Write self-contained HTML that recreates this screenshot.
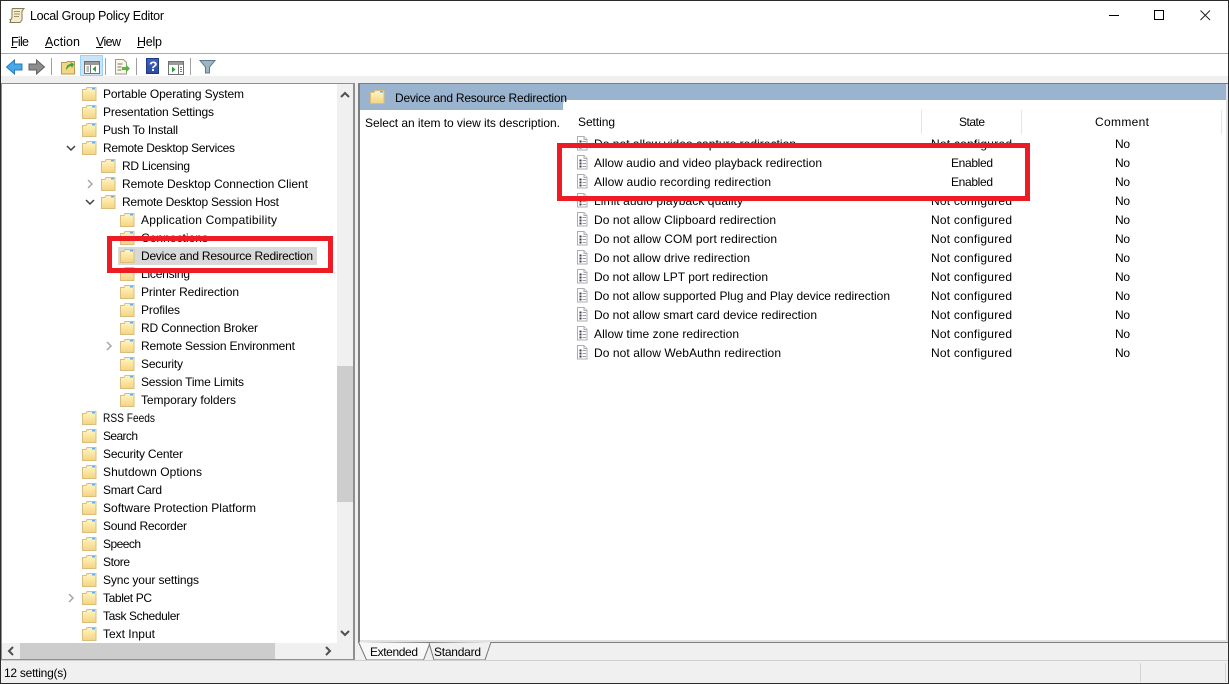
<!DOCTYPE html>
<html><head><meta charset="utf-8"><title>Local Group Policy Editor</title>
<style>
html,body{margin:0;padding:0;background:#fff;width:1229px;height:684px;overflow:hidden}
svg{display:block}
text{font-family:"Liberation Sans",sans-serif;font-size:12px;fill:#000}
.t{font-size:12.5px}
</style></head><body>
<svg width="1229" height="684" viewBox="0 0 1229 684" xmlns="http://www.w3.org/2000/svg">
<defs>
<linearGradient id="fg" x1="0" y1="0" x2="0" y2="1"><stop offset="0" stop-color="#fff0b8"/><stop offset="1" stop-color="#f5d583"/></linearGradient>
<linearGradient id="hb" x1="0" y1="0" x2="0" y2="1"><stop offset="0" stop-color="#3f5fc0"/><stop offset="1" stop-color="#2f4aa0"/></linearGradient>
<g id="f">
<path d="M0.500 2.500h3.500l1-2h9v13h-13.500z" fill="#fbeeca" stroke="#d9bd7c"/>
<rect x="10" y="1" width="3" height="1.500" fill="#62aee6"/>
<rect x="1" y="3" width="12.500" height="10" fill="url(#fg)"/>
</g>
<g id="d">
<path d="M0.500 0.500h6.500l3 3v10.500h-9.500z" fill="#fff" stroke="#adadad"/>
<path d="M7 0.500v3h3" fill="#f0f0f0" stroke="#adadad"/>
<path d="M2.500 4.500h2v2h-2zM2.500 7.500h2v2h-2zM2.500 10.500h2v2h-2z" fill="#3c3c50"/>
<path d="M5.500 5.500h3.500M5.500 8.500h3.500M5.500 11.500h3.500" stroke="#9a9aa8"/>
</g>
</defs>

<rect width="1229" height="684" fill="#fff"/>

<!-- toolbar / menu separators -->
<rect x="1" y="53" width="1227" height="1" fill="#a9a9b8"/>
<rect x="1" y="76" width="1227" height="7" fill="#f0f0f0"/>
<rect x="1" y="83" width="1227" height="578" fill="#f0f0f0"/>

<!-- title bar -->
<path d="M12.500 8.500h11.500l-2 2.500v9l-2 2.500h-10.500c1.500-.5 1.500-2.500 0-3h1.500l1-2v-8z" fill="#f5ecc8" stroke="#85795a"/>
<path d="M14 11.500h6M14 14h6M14 16.500h5" stroke="#9c9275"/>
<text x="30" y="20" class="t" textLength="134" lengthAdjust="spacing">Local Group Policy Editor</text>
<rect x="1109" y="15" width="10" height="1" fill="#000"/>
<rect x="1154.500" y="10.500" width="9" height="9" fill="none" stroke="#000"/>
<path d="M1200.500 10.500l9.500 9.500M1210 10.500l-9.500 9.500" stroke="#222" fill="none"/>

<!-- menu -->
<text x="11" y="46" class="t" textLength="18" lengthAdjust="spacing">File</text><rect x="11" y="47" width="6" height="1" fill="#000"/>
<text x="45" y="46" class="t" textLength="35" lengthAdjust="spacing">Action</text><rect x="45" y="47" width="7" height="1" fill="#000"/>
<text x="96" y="46" class="t" textLength="25" lengthAdjust="spacing">View</text><rect x="96" y="47" width="7" height="1" fill="#000"/>
<text x="137" y="46" class="t" textLength="25" lengthAdjust="spacing">Help</text><rect x="137" y="47" width="7" height="1" fill="#000"/>

<!-- toolbar -->
<path d="M6.500 67l8-7v4h7.500v6h-7.500v4z" fill="#45a8ea" stroke="#2c78b8"/>
<path d="M44.500 67l-8-7v4h-7.500v6h7.500v4z" fill="#8d8d8d" stroke="#606060"/>
<rect x="51" y="58" width="1" height="17" fill="#a0a0a0"/>
<path d="M61.500 62.500h5l1-1h7v12.500h-13z" fill="#f4d684" stroke="#b89a50"/>
<path d="M66 70c0-4 2-6 5-6l-1-2 4 2-2 4-1-2c-2 0-3 2-5 4z" fill="#3fa33a"/>
<rect x="80.500" y="55.500" width="22" height="20" fill="#cce4f7" stroke="#99d1ff"/>
<rect x="84.500" y="61.500" width="15" height="12" fill="#fff" stroke="#707070"/>
<rect x="85" y="62" width="14" height="3" fill="#9a9a9a"/>
<path d="M90.500 65v8" stroke="#707070"/>
<path d="M86.500 67h2.500M86.500 69h2.500M86.500 71h2.500" stroke="#777"/>
<path d="M96 66v6l-3.500-3z" fill="#25a03a"/>
<rect x="105" y="58" width="1" height="17" fill="#a0a0a0"/>
<path d="M115.500 59.500h8l3 3v11.500h-11z" fill="#fbf6e6" stroke="#9a9a8a"/>
<path d="M117.500 64h5M117.500 67h4M117.500 70h4" stroke="#777"/>
<path d="M122 67h4v-2.500l4 4-4 4v-2.500h-4z" fill="#55b83a"/>
<rect x="136" y="58" width="1" height="17" fill="#a0a0a0"/>
<rect x="146.500" y="58.500" width="12" height="15" fill="url(#hb)" stroke="#1f3a85"/>
<text x="149" y="71" style="font-size:14px;font-weight:bold;fill:#fff">?</text>
<rect x="168.500" y="61.500" width="15" height="13" fill="#fff" stroke="#707070"/>
<rect x="169" y="62" width="14" height="3" fill="#9a9a9a"/>
<path d="M178.500 65v9" stroke="#707070"/>
<path d="M180 67.500h2M180 69.500h2M180 71.500h2" stroke="#777"/>
<path d="M172 66.500v6l3.500-3z" fill="#25a03a"/>
<rect x="190" y="58" width="1" height="17" fill="#a0a0a0"/>
<path d="M200 60.500h15l-5.500 6.500v6l-4 0v-6z" fill="#9db6c4" stroke="#62788a"/>

<!-- tree panel -->
<rect x="1" y="83" width="354" height="577" fill="#8f8f8f"/>
<rect x="2" y="84" width="351" height="575" fill="#fff"/>
<rect x="337" y="84" width="16" height="559" fill="#f0f0f0"/>
<rect x="337" y="366" width="16" height="136" fill="#cdcdcd"/>
<rect x="2" y="643" width="351" height="16" fill="#f0f0f0"/>
<rect x="20" y="643" width="255" height="16" fill="#cdcdcd"/>
<path d="M341 97l4-4 4 4" fill="none" stroke="#505050" stroke-width="2"/>
<path d="M341 631l4 4 4-4" fill="none" stroke="#505050" stroke-width="2"/>
<path d="M13 647l-4 4 4 4" fill="none" stroke="#505050" stroke-width="2"/>
<path d="M326 647l4 4-4 4" fill="none" stroke="#505050" stroke-width="2"/>

<!-- tree selection -->
<rect x="118" y="247" width="199" height="18" fill="#d9d9d9"/>

<!-- tree icons -->
<use href="#f" x="82" y="87"/><use href="#f" x="82" y="105"/><use href="#f" x="82" y="123"/><use href="#f" x="82" y="141"/>
<use href="#f" x="101" y="159"/><use href="#f" x="101" y="177"/><use href="#f" x="101" y="195"/>
<use href="#f" x="120" y="213"/><use href="#f" x="120" y="231"/><use href="#f" x="120" y="249"/><use href="#f" x="120" y="267"/><use href="#f" x="120" y="285"/><use href="#f" x="120" y="303"/><use href="#f" x="120" y="321"/><use href="#f" x="120" y="339"/><use href="#f" x="120" y="357"/><use href="#f" x="120" y="375"/><use href="#f" x="120" y="393"/>
<use href="#f" x="82" y="411"/><use href="#f" x="82" y="429"/><use href="#f" x="82" y="447"/><use href="#f" x="82" y="465"/><use href="#f" x="82" y="483"/><use href="#f" x="82" y="501"/><use href="#f" x="82" y="519"/><use href="#f" x="82" y="537"/><use href="#f" x="82" y="555"/><use href="#f" x="82" y="573"/><use href="#f" x="82" y="591"/><use href="#f" x="82" y="609"/><use href="#f" x="82" y="627"/>

<!-- expanders -->
<path d="M67 146l4 4 4-4" fill="none" stroke="#404040" stroke-width="1.500"/>
<path d="M86 200l4 4 4-4" fill="none" stroke="#404040" stroke-width="1.500"/>
<path d="M88 180l4 4-4 4" fill="none" stroke="#a6a6a6" stroke-width="1.500"/>
<path d="M107 342l4 4-4 4" fill="none" stroke="#a6a6a6" stroke-width="1.500"/>
<path d="M69 594l4 4-4 4" fill="none" stroke="#a6a6a6" stroke-width="1.500"/>

<!-- tree text -->
<text x="103" y="98" textLength="141" lengthAdjust="spacing">Portable Operating System</text>
<text x="103" y="116" textLength="111" lengthAdjust="spacing">Presentation Settings</text>
<text x="103" y="134" textLength="75" lengthAdjust="spacing">Push To Install</text>
<text x="103" y="152" textLength="132" lengthAdjust="spacing">Remote Desktop Services</text>
<text x="122" y="170" textLength="68" lengthAdjust="spacing">RD Licensing</text>
<text x="122" y="188" textLength="186" lengthAdjust="spacing">Remote Desktop Connection Client</text>
<text x="122" y="206" textLength="157" lengthAdjust="spacing">Remote Desktop Session Host</text>
<text x="141" y="224" textLength="136" lengthAdjust="spacing">Application Compatibility</text>
<text x="141" y="242" textLength="67" lengthAdjust="spacing">Connections</text>
<text x="141" y="260" textLength="172" lengthAdjust="spacing">Device and Resource Redirection</text>
<text x="141" y="278" textLength="49" lengthAdjust="spacing">Licensing</text>
<text x="141" y="296" textLength="98" lengthAdjust="spacing">Printer Redirection</text>
<text x="141" y="314" textLength="39" lengthAdjust="spacing">Profiles</text>
<text x="141" y="332" textLength="117" lengthAdjust="spacing">RD Connection Broker</text>
<text x="141" y="350" textLength="154" lengthAdjust="spacing">Remote Session Environment</text>
<text x="141" y="368" textLength="42" lengthAdjust="spacing">Security</text>
<text x="141" y="386" textLength="103" lengthAdjust="spacing">Session Time Limits</text>
<text x="141" y="404" textLength="95" lengthAdjust="spacing">Temporary folders</text>
<text x="103" y="422" textLength="52" lengthAdjust="spacingAndGlyphs">RSS Feeds</text>
<text x="103" y="440" textLength="35" lengthAdjust="spacing">Search</text>
<text x="103" y="458" textLength="80" lengthAdjust="spacing">Security Center</text>
<text x="103" y="476" textLength="99" lengthAdjust="spacing">Shutdown Options</text>
<text x="103" y="494" textLength="59" lengthAdjust="spacing">Smart Card</text>
<text x="103" y="512" textLength="153" lengthAdjust="spacing">Software Protection Platform</text>
<text x="103" y="530" textLength="84" lengthAdjust="spacing">Sound Recorder</text>
<text x="103" y="548" textLength="38" lengthAdjust="spacing">Speech</text>
<text x="103" y="566" textLength="27" lengthAdjust="spacing">Store</text>
<text x="103" y="584" textLength="96" lengthAdjust="spacing">Sync your settings</text>
<text x="103" y="602" textLength="49" lengthAdjust="spacing">Tablet PC</text>
<text x="103" y="620" textLength="77" lengthAdjust="spacing">Task Scheduler</text>
<text x="103" y="638" textLength="52" lengthAdjust="spacing">Text Input</text>

<!-- right panel -->
<rect x="358" y="83" width="870" height="560" fill="#7d7d7d"/>
<rect x="360" y="84" width="868" height="558" fill="#e2e2e2"/>
<rect x="360" y="84" width="866" height="556" fill="#fff"/>
<rect x="360" y="84" width="866" height="16" fill="#9ab3cf"/>
<rect x="360" y="100" width="203" height="10" fill="#9ab3cf"/>
<path d="M563 100h5q-5 0-5 5z" fill="#9ab3cf"/>
<use href="#f" x="370" y="90"/>
<text x="395" y="102" textLength="172" lengthAdjust="spacing">Device and Resource Redirection</text>
<text x="365" y="127" textLength="195" lengthAdjust="spacing">Select an item to view its description.</text>

<!-- list header -->
<text x="578" y="126" textLength="37" lengthAdjust="spacing">Setting</text>
<text x="959" y="126" textLength="26" lengthAdjust="spacing">State</text>
<text x="1095" y="126" textLength="54" lengthAdjust="spacing">Comment</text>
<rect x="921" y="110" width="1" height="24" fill="#e5e5e5"/>
<rect x="1021" y="110" width="1" height="24" fill="#e5e5e5"/>
<rect x="1221" y="110" width="1" height="24" fill="#e5e5e5"/>

<!-- list icons -->
<use href="#d" x="577" y="136"/><use href="#d" x="577" y="155"/><use href="#d" x="577" y="174"/><use href="#d" x="577" y="193"/><use href="#d" x="577" y="212"/><use href="#d" x="577" y="231"/><use href="#d" x="577" y="250"/><use href="#d" x="577" y="269"/><use href="#d" x="577" y="288"/><use href="#d" x="577" y="307"/><use href="#d" x="577" y="326"/><use href="#d" x="577" y="345"/>

<!-- list rows -->
<text x="594" y="148" textLength="202" lengthAdjust="spacing">Do not allow video capture redirection</text>
<text x="931" y="148" textLength="81" lengthAdjust="spacing">Not configured</text><text x="1115" y="148" textLength="15" lengthAdjust="spacing">No</text>
<text x="594" y="167" textLength="228" lengthAdjust="spacing">Allow audio and video playback redirection</text>
<text x="951" y="167" textLength="42" lengthAdjust="spacing">Enabled</text><text x="1115" y="167" textLength="15" lengthAdjust="spacing">No</text>
<text x="594" y="186" textLength="177" lengthAdjust="spacing">Allow audio recording redirection</text>
<text x="951" y="186" textLength="42" lengthAdjust="spacing">Enabled</text><text x="1115" y="186" textLength="15" lengthAdjust="spacing">No</text>
<text x="594" y="205" textLength="149" lengthAdjust="spacing">Limit audio playback quality</text>
<text x="931" y="205" textLength="81" lengthAdjust="spacing">Not configured</text><text x="1115" y="205" textLength="15" lengthAdjust="spacing">No</text>
<text x="594" y="224" textLength="182" lengthAdjust="spacing">Do not allow Clipboard redirection</text>
<text x="931" y="224" textLength="81" lengthAdjust="spacing">Not configured</text><text x="1115" y="224" textLength="15" lengthAdjust="spacing">No</text>
<text x="594" y="243" textLength="183" lengthAdjust="spacing">Do not allow COM port redirection</text>
<text x="931" y="243" textLength="81" lengthAdjust="spacing">Not configured</text><text x="1115" y="243" textLength="15" lengthAdjust="spacing">No</text>
<text x="594" y="262" textLength="156" lengthAdjust="spacing">Do not allow drive redirection</text>
<text x="931" y="262" textLength="81" lengthAdjust="spacing">Not configured</text><text x="1115" y="262" textLength="15" lengthAdjust="spacing">No</text>
<text x="594" y="281" textLength="174" lengthAdjust="spacing">Do not allow LPT port redirection</text>
<text x="931" y="281" textLength="81" lengthAdjust="spacing">Not configured</text><text x="1115" y="281" textLength="15" lengthAdjust="spacing">No</text>
<text x="594" y="300" textLength="296" lengthAdjust="spacing">Do not allow supported Plug and Play device redirection</text>
<text x="931" y="300" textLength="81" lengthAdjust="spacing">Not configured</text><text x="1115" y="300" textLength="15" lengthAdjust="spacing">No</text>
<text x="594" y="319" textLength="223" lengthAdjust="spacing">Do not allow smart card device redirection</text>
<text x="931" y="319" textLength="81" lengthAdjust="spacing">Not configured</text><text x="1115" y="319" textLength="15" lengthAdjust="spacing">No</text>
<text x="594" y="338" textLength="145" lengthAdjust="spacing">Allow time zone redirection</text>
<text x="931" y="338" textLength="81" lengthAdjust="spacing">Not configured</text><text x="1115" y="338" textLength="15" lengthAdjust="spacing">No</text>
<text x="594" y="357" textLength="187" lengthAdjust="spacing">Do not allow WebAuthn redirection</text>
<text x="931" y="357" textLength="81" lengthAdjust="spacing">Not configured</text><text x="1115" y="357" textLength="15" lengthAdjust="spacing">No</text>

<!-- tabs -->
<path d="M358.500 642l8 18h57l6.500-17" fill="#f8f8f8" stroke="#777"/>
<path d="M429 643l5 17h51l6-18" fill="#f0f0f0" stroke="#777"/>
<text x="370" y="656" textLength="48" lengthAdjust="spacing">Extended</text>
<text x="434" y="656" textLength="47" lengthAdjust="spacing">Standard</text>

<!-- status bar -->
<rect x="1" y="660" width="1227" height="1" fill="#d0d0d0"/>
<rect x="1" y="661" width="1227" height="22" fill="#f0f0f0"/>
<rect x="1140" y="663" width="1" height="19" fill="#d5d5d5"/>
<rect x="1225" y="663" width="1" height="19" fill="#d5d5d5"/>
<text x="4" y="677" textLength="63" lengthAdjust="spacing">12 setting(s)</text>

<!-- red annotations -->
<rect x="109.500" y="238.500" width="221" height="32" fill="none" stroke="#ed1c24" stroke-width="5"/>
<rect x="559.500" y="145.500" width="468" height="53" fill="none" stroke="#ed1c24" stroke-width="5"/>

<!-- window border -->
<rect x="0.500" y="0.500" width="1228" height="683" fill="none" stroke="#2b2b2b"/>
</svg>
</body></html>
